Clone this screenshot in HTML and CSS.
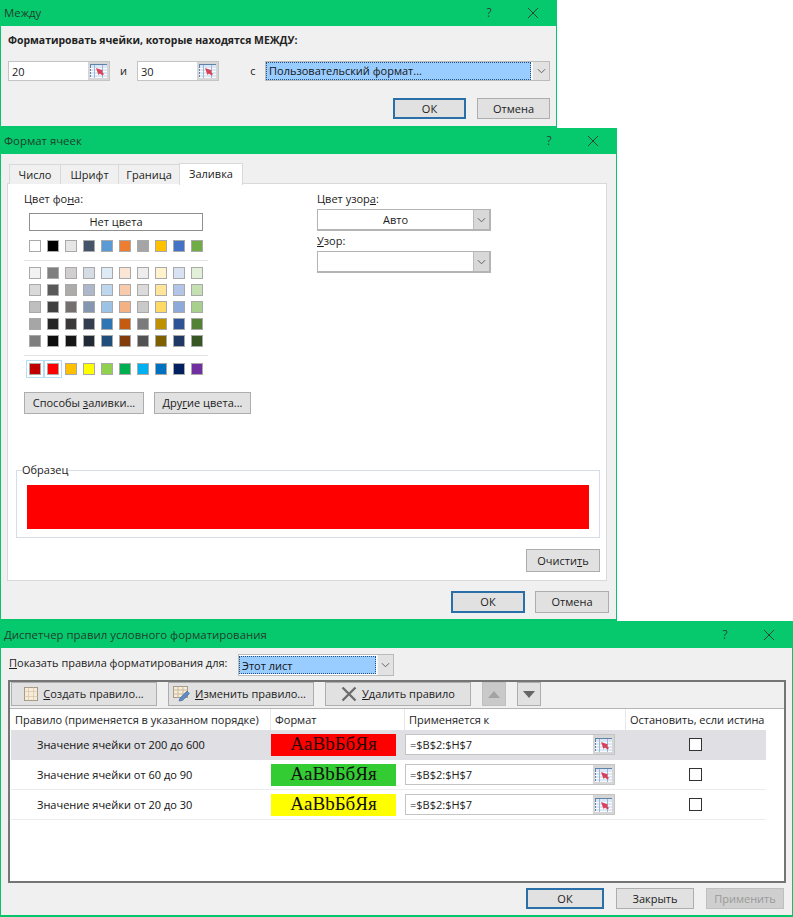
FILE: index.html
```html
<!DOCTYPE html>
<html lang="ru">
<head>
<meta charset="utf-8">
<title>Условное форматирование</title>
<link rel="stylesheet" href="styles.css">
</head>
<body>
<svg class="defs" width="0" height="0" aria-hidden="true">
  <symbol id="rng" viewBox="0 0 17 14">
    <rect x="0" y="0" width="17" height="14" fill="#dbe7f4"/>
    <path d="M0 0.5H17M0.5 0V14" stroke="#5f82ab" fill="none"/>
    <path d="M0 4.5H17M0 7.5H17M0 10.5H17M0 13.5H17" stroke="#fbfcfe" fill="none"/>
    <path d="M4.5 1V14M12.5 1V14" stroke="#9db8d6" fill="none"/>
    <path d="M6 4L13 6.5L12 8L14 10L12.5 11.5L10 9.5L8.5 11Z" fill="#d94256"/>
  </symbol>
</svg>

<section class="dialog dialog-between">
  <header class="titlebar"><span class="title">Между</span><span class="help">?</span><svg class="close" viewBox="0 0 12 12"><path d="M1 1L11 11M11 1L1 11"/></svg></header>
  <p class="heading">Форматировать ячейки, которые находятся МЕЖДУ:</p>
  <div class="between-row">
    <div class="range w102"><span class="range-val">20</span><span class="range-btn"><svg class="rng"><use href="#rng"/></svg></span></div>
    <span class="conj conj-i">и</span>
    <div class="range w82"><span class="range-val">30</span><span class="range-btn"><svg class="rng"><use href="#rng"/></svg></span></div>
    <span class="conj conj-s">с</span>
    <div class="combo combo-fmt"><span class="combo-sel">Пользовательский формат...</span><span class="combo-arrow"><svg viewBox="0 0 10 6"><path d="M1 1L5 5L9 1"/></svg></span></div>
  </div>
  <div class="actions actions-between">
    <button class="btn btn-default">ОК</button>
    <button class="btn">Отмена</button>
  </div>
</section>

<section class="dialog dialog-cells">
  <header class="titlebar"><span class="title">Формат ячеек</span><span class="help">?</span><svg class="close" viewBox="0 0 12 12"><path d="M1 1L11 11M11 1L1 11"/></svg></header>
  <nav class="tabs">
    <span class="tab t1">Число</span><span class="tab t2">Шрифт</span><span class="tab t3">Граница</span><span class="tab tab-active">Заливка</span>
  </nav>
  <div class="panel">
    <div class="fill-top">
      <div class="fill-left">
        <div class="label">Цвет фо<u>н</u>а:</div>
        <div class="no-color">Нет цвета</div>
        <div class="swatches">
          <i style="background:#FFFFFF"></i><i style="background:#000000"></i><i style="background:#E7E6E6"></i><i style="background:#44546A"></i><i style="background:#5B9BD5"></i><i style="background:#ED7D31"></i><i style="background:#A5A5A5"></i><i style="background:#FFC000"></i><i style="background:#4472C4"></i><i style="background:#70AD47"></i>
        </div>
        <div class="sep"></div>
        <div class="swatches tints">
          <i style="background:#F2F2F2"></i><i style="background:#7F7F7F"></i><i style="background:#D0CECE"></i><i style="background:#D6DCE4"></i><i style="background:#DEEBF6"></i><i style="background:#FBE5D5"></i><i style="background:#EDEDED"></i><i style="background:#FFF2CC"></i><i style="background:#D9E2F3"></i><i style="background:#E2EFD9"></i>
          <i style="background:#D9D9D9"></i><i style="background:#595959"></i><i style="background:#AEABAB"></i><i style="background:#ADB9CA"></i><i style="background:#BDD7EE"></i><i style="background:#F7CBAC"></i><i style="background:#DBDBDB"></i><i style="background:#FFE599"></i><i style="background:#B4C6E7"></i><i style="background:#C5E0B3"></i>
          <i style="background:#BFBFBF"></i><i style="background:#404040"></i><i style="background:#757070"></i><i style="background:#8496B0"></i><i style="background:#9CC3E5"></i><i style="background:#F4B183"></i><i style="background:#C9C9C9"></i><i style="background:#FFD965"></i><i style="background:#8EAADB"></i><i style="background:#A8D08D"></i>
          <i style="background:#A6A6A6"></i><i style="background:#262626"></i><i style="background:#3A3838"></i><i style="background:#323E4F"></i><i style="background:#2E75B5"></i><i style="background:#C55A11"></i><i style="background:#7B7B7B"></i><i style="background:#BF9000"></i><i style="background:#2F5496"></i><i style="background:#538135"></i>
          <i style="background:#7F7F7F"></i><i style="background:#0D0D0D"></i><i style="background:#171616"></i><i style="background:#222A35"></i><i style="background:#1E4E79"></i><i style="background:#833C0B"></i><i style="background:#525252"></i><i style="background:#7F6000"></i><i style="background:#1F3864"></i><i style="background:#375623"></i>
        </div>
        <div class="sep sep-std"></div>
        <div class="swatches">
          <i class="picked" style="background:#C00000"></i><i class="picked" style="background:#FF0000"></i><i style="background:#FFC000"></i><i style="background:#FFFF00"></i><i style="background:#92D050"></i><i style="background:#00B050"></i><i style="background:#00B0F0"></i><i style="background:#0070C0"></i><i style="background:#002060"></i><i style="background:#7030A0"></i>
        </div>
        <div class="fill-btns">
          <button class="btn btn-ways">Способы <u>з</u>аливки...</button>
          <button class="btn btn-more">Дру<u>г</u>ие цвета...</button>
        </div>
      </div>
      <div class="fill-right">
        <div class="label label-tight">Цвет узор<u>а</u>:</div>
        <div class="pick"><span class="pick-val">Авто</span><span class="combo-arrow"><svg viewBox="0 0 10 6"><path d="M1 1L5 5L9 1"/></svg></span></div>
        <div class="label label-gap"><u>У</u>зор:</div>
        <div class="pick"><span class="pick-val"></span><span class="combo-arrow"><svg viewBox="0 0 10 6"><path d="M1 1L5 5L9 1"/></svg></span></div>
      </div>
    </div>
    <fieldset class="sample">
      <legend>Образец</legend>
      <div class="sample-fill"></div>
    </fieldset>
    <div class="clear-row"><button class="btn btn-clear">Очисти<u>т</u>ь</button></div>
  </div>
  <div class="actions actions-cells">
    <button class="btn btn-default">ОК</button>
    <button class="btn">Отмена</button>
  </div>
</section>

<section class="dialog dialog-rules">
  <header class="titlebar titlebar-rules"><span class="title">Диспетчер правил условного форматирования</span><span class="help">?</span><svg class="close" viewBox="0 0 12 12"><path d="M1 1L11 11M11 1L1 11"/></svg></header>
  <div class="scope-row">
    <span class="scope-label"><u>П</u>оказать правила форматирования для:</span>
    <div class="combo combo-scope"><span class="combo-sel">Этот лист</span><span class="combo-arrow"><svg viewBox="0 0 10 6"><path d="M1 1L5 5L9 1"/></svg></span></div>
  </div>
  <div class="rules-box">
    <div class="toolbar">
      <button class="btn tool">
        <svg class="tool-ico" viewBox="0 0 14 14"><rect x="0.5" y="0.5" width="13" height="13" fill="#f8ecd6" stroke="#a39a8c"/><path d="M0.5 4.5H13.5M0.5 9.5H13.5M4.5 0.5V13.5M9.5 0.5V13.5" stroke="#c9b99f" stroke-dasharray="1 1" fill="none"/></svg>
        <span><u>С</u>оздать правило...</span>
      </button>
      <button class="btn tool">
        <svg class="tool-ico tool-ico-edit" viewBox="0 0 18 16"><rect x="0.5" y="0.5" width="14" height="11" fill="#f8ecd6" stroke="#a39a8c"/><path d="M0.5 4H14.5M0.5 8H14.5M5 0.5V11.5M10 0.5V11.5" stroke="#c9b99f" fill="none"/><path d="M6 15L7 12L14 5L16.5 7.5L9.5 14.5Z" fill="#5f8cc4" stroke="#3e6496" stroke-width="0.6"/></svg>
        <span><u>И</u>зменить правило...</span>
      </button>
      <button class="btn tool">
        <svg class="tool-ico tool-ico-x" viewBox="0 0 16 16"><path d="M1.5 1.5L14.5 14.5M14.5 1.5L1.5 14.5" stroke="#6d6d6d" stroke-width="2.4" fill="none"/></svg>
        <span><u>У</u>далить правило</span>
      </button>
      <button class="btn arrow arrow-up"><svg viewBox="0 0 12 7"><path d="M6 0L12 7H0Z"/></svg></button>
      <button class="btn arrow arrow-down"><svg viewBox="0 0 12 7"><path d="M0 0H12L6 7Z"/></svg></button>
    </div>
    <div class="table">
      <div class="thead grid-row">
        <span class="th">Правило (применяется в указанном порядке)</span>
        <span class="th">Формат</span>
        <span class="th">Применяется к</span>
        <span class="th">Остановить, если истина</span>
      </div>
      <div class="grid-row rule rule-selected">
        <span class="rule-name">Значение ячейки от 200 до 600</span>
        <span class="fmt fmt-red">AaBbБбЯя</span>
        <div class="range range-table"><span class="range-val">=$B$2:$H$7</span><span class="range-btn"><svg class="rng"><use href="#rng"/></svg></span></div>
        <span class="check-cell"><span class="check"></span></span>
      </div>
      <div class="grid-row rule">
        <span class="rule-name">Значение ячейки от 60 до 90</span>
        <span class="fmt fmt-green">AaBbБбЯя</span>
        <div class="range range-table"><span class="range-val">=$B$2:$H$7</span><span class="range-btn"><svg class="rng"><use href="#rng"/></svg></span></div>
        <span class="check-cell"><span class="check"></span></span>
      </div>
      <div class="grid-row rule">
        <span class="rule-name">Значение ячейки от 20 до 30</span>
        <span class="fmt fmt-yellow">AaBbБбЯя</span>
        <div class="range range-table"><span class="range-val">=$B$2:$H$7</span><span class="range-btn"><svg class="rng"><use href="#rng"/></svg></span></div>
        <span class="check-cell"><span class="check"></span></span>
      </div>
    </div>
  </div>
  <div class="actions actions-rules">
    <button class="btn btn-default">ОК</button>
    <button class="btn">Закрыть</button>
    <button class="btn btn-disabled">Применить</button>
  </div>
</section>
</body>
</html>
```

FILE: styles.css
```css
* { box-sizing: border-box; }
html, body { margin: 0; padding: 0; background: #fff; }
body { width: 793px; height: 917px; overflow: hidden; font: 11px/14px "Open Sans", "Noto Sans", sans-serif; color: #1c1c1c; }
u { text-underline-offset: 1px; }
.defs { position: absolute; }

.dialog { background: #f0f0f0; border: 1px solid #06c66c; border-top: 0; border-bottom-width: 2px; display: block; }
.dialog-between { width: 557px; height: 128px; }
.dialog-cells { width: 617px; height: 493px; }
.dialog-rules { width: 793px; height: 296px; }

.titlebar { height: 26px; background: #06c96e; display: flex; align-items: center; padding: 0 0 0 3px; margin: 0 -1px; color: #1f3f2b; font-size: 11.4px; }
.titlebar-rules { height: 27px; }
.title { flex: 1; padding-left: 1px; }
.help { width: 12px; text-align: center; margin-right: 32px; font-size: 12px; color: #2e4a38; }
.close { width: 12px; height: 12px; margin-right: 18px; fill: none; stroke: #2a4a36; stroke-width: 1; }

.heading { margin: 0; padding: 7px 0 0 7px; height: 35px; font-weight: 700; font-size: 10.45px; line-height: 14px; color: #222; }

.between-row { display: flex; align-items: center; height: 20px; padding-left: 7px; }
.range { display: flex; background: #fff; border: 1px solid #c4c4c4; height: 20px; }
.w102 { width: 102px; }
.w82 { width: 82px; }
.range-val { flex: 1; padding-left: 3px; line-height: 19px; font-size: 11px; overflow: hidden; }
.range-btn { width: 21px; background: #d6d6d6; display: flex; align-items: center; justify-content: center; }
.rng { width: 17px; height: 14px; display: block; }
.conj { text-align: center; width: 28px; line-height: 20px; }
.conj-i { width: 27px; }
.conj-s { width: 46px; padding-left: 22px; }

.combo { display: flex; align-items: stretch; background: #fff; }
.combo-fmt { width: 285px; height: 20px; border: 1px solid #bbb; }
.combo-sel { flex: 1; background: #99ccff; outline: 1px dotted #24527a; outline-offset: -1px; padding-left: 3px; line-height: 17px; color: #151515; }
.combo-arrow { width: 17px; background: #e2e2e2; border-left: 1px solid #f5f5f5; display: flex; align-items: center; justify-content: center; margin-left: 1px; }
.combo-arrow svg { width: 9px; height: 6px; fill: none; stroke: #555; stroke-width: 1; }

.btn { font: inherit; color: #1c1c1c; background: #e1e1e1; border: 1px solid #adadad; padding: 0; height: 22px; line-height: 18px; }
.btn-default { border: 2px solid #2a6fa8; }
.btn-disabled { color: #9a9a9a; background: #cfcfcf; border-color: #bfbfbf; }

.actions { display: flex; justify-content: flex-end; }
.actions-between { padding: 17px 6px 0 0; gap: 11px; }
.actions-between .btn { width: 73px; height: 21px; }
.actions-cells { padding: 10px 7px 0 0; gap: 10px; }
.actions-cells .btn { width: 74px; }
.actions-rules { padding: 5px 8px 0 0; gap: 12px; }
.actions-rules .btn { width: 78px; height: 21px; }

.tabs { display: flex; height: 21px; margin: 9px 0 -1px 8px; align-items: flex-end; position: relative; z-index: 1; }
.tab { height: 20px; border: 1px solid #d9d9d9; border-bottom: 0; background: #f0f0f0; text-align: center; line-height: 19px; margin-right: -1px; }
.t1 { width: 52px; }
.t2 { width: 59px; }
.t3 { width: 62px; }
.tab-active { width: 64px; height: 22px; background: #fff; line-height: 20px; margin-bottom: -1px; }

.panel { margin-left: 6px; width: 600px; height: 398px; background: #fff; border: 1px solid #d9d9d9; padding: 8px 5px 0 8px; }
.fill-top { display: flex; height: 269px; padding-left: 8px; }
.fill-left { width: 293px; }
.label { height: 14px; margin-bottom: 7px; }
.no-color { width: 174px; height: 18px; margin-left: 5px; border: 1px solid #8e8e8e; text-align: center; line-height: 16px; }
.swatches { display: grid; grid-template-columns: repeat(10, 12px); column-gap: 6px; row-gap: 5px; margin: 9px 0 0 5px; }
.swatches i { display: block; height: 12px; border: 1px solid #a9a9a9; }
.swatches .picked { outline: 1px solid #b8dcf0; outline-offset: 2px; }
.swatches.tints { margin-top: 6px; }
.sep { height: 1px; background: #e3e3e3; width: 184px; margin-top: 8px; }
.sep-std { margin-top: 8px; }
.sep-std + .swatches { margin-top: 7px; }
.fill-btns { display: flex; gap: 10px; margin-top: 17px; }
.btn-ways { width: 120px; }
.btn-more { width: 97px; }
.fill-right { width: 174px; }
.label-tight { margin-bottom: 3px; }
.label-gap { margin: 3px 0 3px; }
.pick { display: flex; height: 22px; border: 2px solid #b4b4b4; border-width: 1px 2px 2px 1px; background: #fff; }
.pick-val { flex: 1; text-align: center; line-height: 19px; }
.pick .combo-arrow { margin-left: 0; background: #d8d8d8; border-left: 1px solid #bbb; width: 16px; }

.sample { margin: 2px 0 0; padding: 0 10px; width: 584px; height: 75px; border: 1px solid #d5dee6; }
.sample legend { padding: 0; margin-left: -5px; line-height: 14px; height: 14px; }
.sample-fill { height: 44px; background: #ff0000; margin-top: 8px; }
.clear-row { display: flex; justify-content: flex-end; width: 584px; margin-top: 11px; }
.btn-clear { width: 74px; height: 23px; }

.scope-row { display: flex; align-items: center; height: 22px; margin-top: 6px; padding-left: 8px; }
.scope-label { width: 229px; margin-top: -5px; }
.combo-scope { width: 156px; height: 22px; border: 1px solid #bbb; }
.combo-scope .combo-sel { line-height: 19px; margin: 1px 0; }
.combo-scope .combo-arrow { width: 16px; }

.rules-box { margin: 4px 0 0 7px; width: 778px; height: 203px; border: 2px solid #757575; }
.toolbar { display: flex; height: 26px; padding: 0 0 0 1px; background: #f0f0f0; gap: 11px; }
.tool { width: 146px; height: 24px; display: flex; align-items: center; justify-content: center; gap: 5px; }
.tool-ico { width: 14px; height: 14px; flex: none; }
.tool-ico-edit { width: 18px; height: 16px; margin-left: -3px; margin-right: -1px; }
.tool-ico-x { width: 16px; height: 16px; }
.arrow { width: 24px; height: 24px; display: flex; align-items: center; justify-content: center; }
.arrow svg { width: 12px; height: 7px; }
.arrow-up { background: #c9c9c9; border-color: #c0c0c0; }
.arrow-up svg { fill: #a3a3a3; }
.arrow-down svg { fill: #666; }

.table { background: #fff; height: 173px; padding: 0 18px 0 1px; border-top: 1px solid #b5b5b5; }
.grid-row { display: grid; grid-template-columns: 259px 134px 221px 141px; }
.thead { height: 21px; }
.th { padding-left: 4px; line-height: 21px; border-left: 1px solid #e8e8e8; white-space: nowrap; color: #222; }
.th:first-child { border-left: 0; }
.rule { height: 30px; border-bottom: 1px solid #ececec; align-items: center; }
.rule-selected { background: #dfdfe4; border-bottom-color: transparent; }
.rule-name { padding-left: 26px; color: #111; }
.fmt { height: 22px; width: 125px; margin-left: 1px; text-align: center; font: 19px/20px "Liberation Serif", serif; color: #111; }
.fmt-red { background: #ff0000; color: #2b0505; }
.fmt-green { background: #33cc33; }
.fmt-yellow { background: #ffff00; }
.range-table { width: 210px; height: 21px; margin-left: 1px; }
.range-table .range-val { padding-left: 4px; }
.check-cell { display: flex; justify-content: center; }
.check { width: 13px; height: 13px; background: #fff; border: 1px solid #333; margin-right: 1px; }
```
